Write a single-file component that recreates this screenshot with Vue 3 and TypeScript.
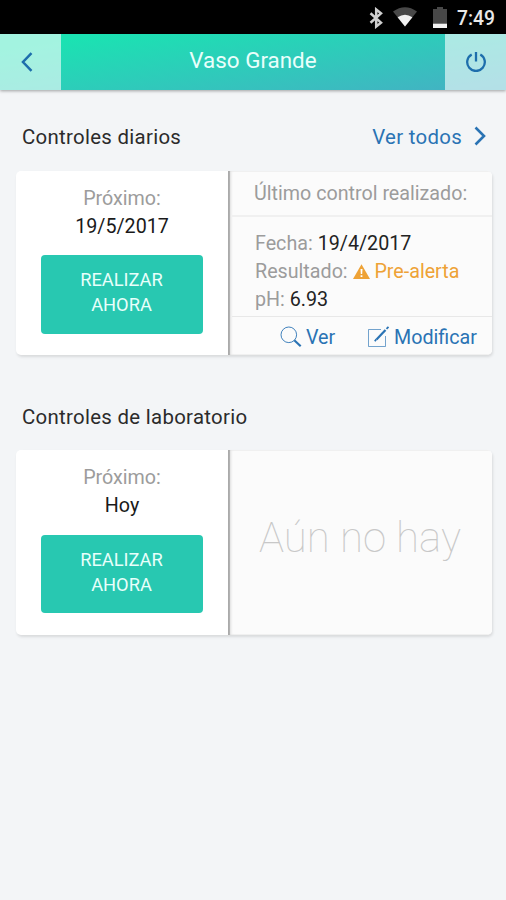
<script setup lang="ts">
interface LastControl {
  date: string
  result: string
  ph: string
}

interface ControlGroup {
  title: string
  next: string
  viewAll: boolean
  last: LastControl | null
}

const groups: ControlGroup[] = [
  {
    title: 'Controles diarios',
    next: '19/5/2017',
    viewAll: true,
    last: { date: '19/4/2017', result: 'Pre-alerta', ph: '6.93' },
  },
  { title: 'Controles de laboratorio', next: 'Hoy', viewAll: false, last: null },
]
</script>

<template>
  <div class="screen">
    <div class="status">
      <svg class="bluetooth" width="14" height="22" viewBox="0 0 14 22" fill="none" stroke="#cfcfcf" stroke-width="2.5">
        <path d="M1.5 6.2 12 15.6 7.2 19.5V2.5L12 6.4 1.5 15.8" />
      </svg>
      <svg class="wifi" width="24" height="20" viewBox="0 0 24 20">
        <path d="M0 4.5Q12-4 24 4.5L12 19.5Z" fill="#484848" />
        <path d="M4.6 10.3Q12 5 19.4 10.3L12 19.5Z" fill="#f2f2f2" />
      </svg>
      <svg class="battery" width="14" height="21" viewBox="0 0 14 21">
        <path d="M0 2h4V0h6v2h4v14H0Z" fill="#484848" />
        <path d="M0 16.5h14V21H0Z" fill="#f2f2f2" />
      </svg>
      <span class="clock">7:49</span>
    </div>

    <header class="bar">
      <button class="bar-button back" aria-label="Volver">
        <svg width="12" height="20" viewBox="0 0 12 20" fill="none" stroke="#1d6eac" stroke-width="2.5">
          <path d="M10.5 1.2 2 10l8.5 8.8" />
        </svg>
      </button>
      <h1>Vaso Grande</h1>
      <button class="bar-button power" aria-label="Salir">
        <svg width="20" height="20" viewBox="0 0 20 20" fill="none" stroke="#1d6eac" stroke-width="2.3">
          <path d="M5.7 2.5a8.8 8.8 0 1 0 8.6 0M10 0v9.5" />
        </svg>
      </button>
    </header>

    <main>
      <section v-for="group in groups" :key="group.title">
        <div class="heading">
          <h2>{{ group.title }}</h2>
          <a v-if="group.viewAll" class="view-all">
            <span>Ver todos</span>
            <svg width="12" height="20" viewBox="0 0 12 20" fill="none" stroke="#2a73b4" stroke-width="2.6">
              <path d="m1.5 1.5 8.5 8.5-8.5 8.5" />
            </svg>
          </a>
        </div>

        <div class="card">
          <div class="next">
            <p class="label">Próximo:</p>
            <p class="value">{{ group.next }}</p>
            <button class="action">REALIZAR<br />AHORA</button>
          </div>

          <div v-if="group.last" class="last">
            <div class="last-title">Último control realizado:</div>
            <div class="details">
              <p>Fecha: <b>{{ group.last.date }}</b></p>
              <p>
                Resultado:
                <span class="warning">
                  <svg width="17" height="15" viewBox="0 0 17 15">
                    <path d="M8.5.3 17 15H0Z" fill="#eea236" />
                    <path d="M7.5 5h2l-.3 5H7.8ZM7.6 11.2h1.8V13H7.6Z" fill="#fff" />
                  </svg>
                  {{ group.last.result }}
                </span>
              </p>
              <p>pH: <b>{{ group.last.ph }}</b></p>
            </div>
            <div class="links">
              <a class="view">
                <svg width="22" height="22" viewBox="0 0 22 22" fill="none" stroke="#2a73b4">
                  <circle cx="8.8" cy="8.8" r="7.8" stroke-width="0.9" />
                  <path d="m14.3 14.3 6.4 6" stroke-width="2.2" />
                </svg>
                <span>Ver</span>
              </a>
              <a class="edit">
                <svg width="23" height="22" viewBox="0 0 23 22" fill="none" stroke="#2a73b4">
                  <path d="M14 3.5H1.5v17h17V10" stroke-width="1" stroke-opacity="0.65" />
                  <path d="m9.5 13.5 9-9.5" stroke-width="2.2" />
                  <path d="m19.5 2.9 2-2M7.8 15.3l1.5-2" stroke-width="1.8" />
                </svg>
                <span>Modificar</span>
              </a>
            </div>
          </div>
          <div v-else class="last empty"><span>Aún no hay</span></div>
        </div>
      </section>
    </main>
  </div>
</template>

<style>
body {
  background: #f3f5f7;
}
</style>

<style scoped>
.screen {
  min-height: 900px;
  font-family: Roboto, "Liberation Sans", sans-serif;
  font-size: 19.7px;
  color: #2b2b2b;
}

h1,
h2,
p {
  margin: 0;
  font-weight: 400;
}

button {
  border: 0;
  padding: 0;
  font: inherit;
}

svg {
  display: block;
  flex: none;
}

.status {
  display: flex;
  align-items: center;
  justify-content: flex-end;
  height: 34px;
  padding-right: 10px;
  background: #000;
}

.bluetooth {
  margin-top: 2px;
}

.wifi {
  margin-left: 10px;
}

.battery {
  margin-left: 16px;
}

.clock {
  width: 39px;
  margin: 3px 0 0 10px;
  color: #e8e8e8;
  font-size: 19.3px;
  font-weight: 500;
  white-space: nowrap;
}

.bar {
  display: flex;
  height: 56px;
  background: linear-gradient(171deg, #1be2b2 12%, #43b2c3 96%);
  box-shadow: 0 1px 3px rgba(0, 0, 0, 0.35);
}

.bar h1 {
  flex: 1;
  color: #e9fffb;
  font-size: 22.4px;
  line-height: 52px;
  text-align: center;
}

.bar-button {
  display: flex;
  align-items: center;
  justify-content: center;
  width: 61px;
  background: rgba(255, 255, 255, 0.6);
}

.back {
  padding-right: 7px;
}

main {
  padding: 32px 14px 0 16px;
}

section {
  height: 279.6px;
}

.heading {
  display: flex;
  justify-content: space-between;
  height: 48.5px;
  padding: 0 6px;
  line-height: 30px;
}

h2 {
  font-size: 20.4px;
  letter-spacing: 0.3px;
}

.view-all {
  display: flex;
  gap: 12px;
  color: #2a73b4;
  font-size: 20.4px;
  letter-spacing: 0.3px;
}

.view-all svg {
  margin-top: 4px;
}

.card {
  display: flex;
  height: 184.5px;
  border-radius: 5px;
  background: #fff;
  box-shadow: 1px 2px 3px rgba(0, 0, 0, 0.11);
}

.next {
  display: flex;
  flex-direction: column;
  align-items: center;
  width: 212px;
  padding-top: 14px;
  box-sizing: border-box;
  line-height: 28px;
}

.label {
  color: #9c9c9c;
}

.value {
  color: #1a1a1a;
}

.action {
  width: 162px;
  height: 78.5px;
  margin-top: 14.6px;
  padding: 0 1px 4px 0;
  border-radius: 4px;
  background: #28c8b1;
  color: #e8fffb;
  font-size: 18.3px;
  line-height: 25px;
}

.last {
  display: flex;
  flex: 1;
  flex-direction: column;
  padding-left: 4px;
  border-radius: 0 5px 5px 0;
  background: #fbfbfb;
  box-shadow: inset 2px 0 1px #aaa, inset 4px 0 2px #eee;
  color: #9c9c9c;
}

.last-title {
  height: 46px;
  padding-left: 22px;
  border-bottom: 2px solid #f0f0f0;
  line-height: 45px;
  box-sizing: border-box;
}

.details {
  height: 99.5px;
  padding: 13px 0 0 23px;
  line-height: 28px;
  box-sizing: border-box;
}

.details b {
  color: #222;
  font-weight: 400;
}

.warning {
  color: #eea236;
}

.warning svg {
  display: inline-block;
  vertical-align: -1px;
}

.links {
  display: flex;
  flex: 1;
  border-top: 1.5px solid #e8e8e8;
  padding-left: 48px;
  color: #2a73b4;
  line-height: 41px;
}

.links a {
  display: flex;
  height: 36px;
}

.links svg {
  margin-top: 9px;
}

.view {
  width: 87px;
  gap: 4px;
}

.edit {
  gap: 4px;
}

.empty {
  align-items: center;
  justify-content: center;
  padding: 0 3px 10px;
  color: #c8c8c8;
  font-size: 42px;
  font-weight: 100;
}
</style>
